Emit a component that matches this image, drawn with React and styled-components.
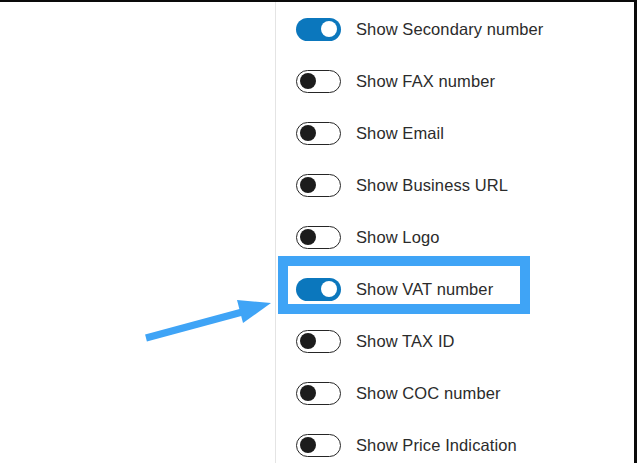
import React from "react"
import styled, { createGlobalStyle } from "styled-components"

const GlobalStyle = createGlobalStyle`
  html, body {
    margin: 0;
    padding: 0;
    background: #fff;
  }
  body {
    font-family: "Liberation Sans", Arial, sans-serif;
  }
`

const Frame = styled.div`
  position: relative;
  box-sizing: border-box;
  width: 637px;
  height: 463px;
  border-top: 2px solid #0a0a0a;
  border-right: 3px solid #0a0a0a;
  background: #fff;
  display: flex;
  overflow: hidden;
`
const Gutter = styled.div`
  width: 275px;
  flex-shrink: 0;
`
const Panel = styled.div`
  flex: 1;
  border-left: 1px solid #e4e4e4;
  padding-top: 1px;
  display: flex;
  flex-direction: column;
`
const Row = styled.div`
  position: relative;
  flex-shrink: 0;
  height: 52px;
  display: flex;
  align-items: center;
  padding-left: 20px;
  gap: 15px;
  ${({ $highlight }) => $highlight && `
    &::before {
      content: "";
      position: absolute;
      left: 2px;
      top: -7px;
      width: 252px;
      height: 58px;
      box-sizing: border-box;
      border: 10px solid #3fa4f6;
    }
  `}
`
const Toggle = styled.span`
  position: relative;
  box-sizing: border-box;
  width: 45px;
  height: 23px;
  border-radius: 12px;
  flex-shrink: 0;
  background: ${({ $on }) => ($on ? "#0b77bd" : "#fff")};
  border: ${({ $on }) => ($on ? "none" : "1.5px solid #262626")};
  &::after {
    content: "";
    position: absolute;
    top: 50%;
    transform: translateY(-50%);
    width: 16px;
    height: 16px;
    border-radius: 50%;
    background: ${({ $on }) => ($on ? "#fff" : "#1c1c1c")};
    ${({ $on }) => ($on ? "right: 4px;" : "left: 3px;")}
  }
`
const Label = styled.span`
  font-size: 16.5px;
  color: #2b2b2b;
  letter-spacing: 0.1px;
`
const Arrow = styled.svg`
  position: absolute;
  left: 0;
  top: 0;
  pointer-events: none;
`

const options = [
  { label: "Show Secondary number", on: true },
  { label: "Show FAX number" },
  { label: "Show Email" },
  { label: "Show Business URL" },
  { label: "Show Logo" },
  { label: "Show VAT number", on: true, highlight: true },
  { label: "Show TAX ID" },
  { label: "Show COC number" },
  { label: "Show Price Indication" },
]

export default function App() {
  return (
    <>
      <GlobalStyle />
      <Frame>
        <Gutter />
        <Panel>
          {options.map((o) => (
            <Row key={o.label} $highlight={o.highlight}>
              <Toggle $on={o.on} />
              <Label>{o.label}</Label>
            </Row>
          ))}
        </Panel>
        <Arrow width="637" height="463" viewBox="0 0 637 463">
          <line x1="146" y1="336" x2="246" y2="309" stroke="#3fa4f6" strokeWidth="7" />
          <polygon points="271,301 237,298 243,321" fill="#3fa4f6" />
        </Arrow>
      </Frame>
    </>
  )
}
